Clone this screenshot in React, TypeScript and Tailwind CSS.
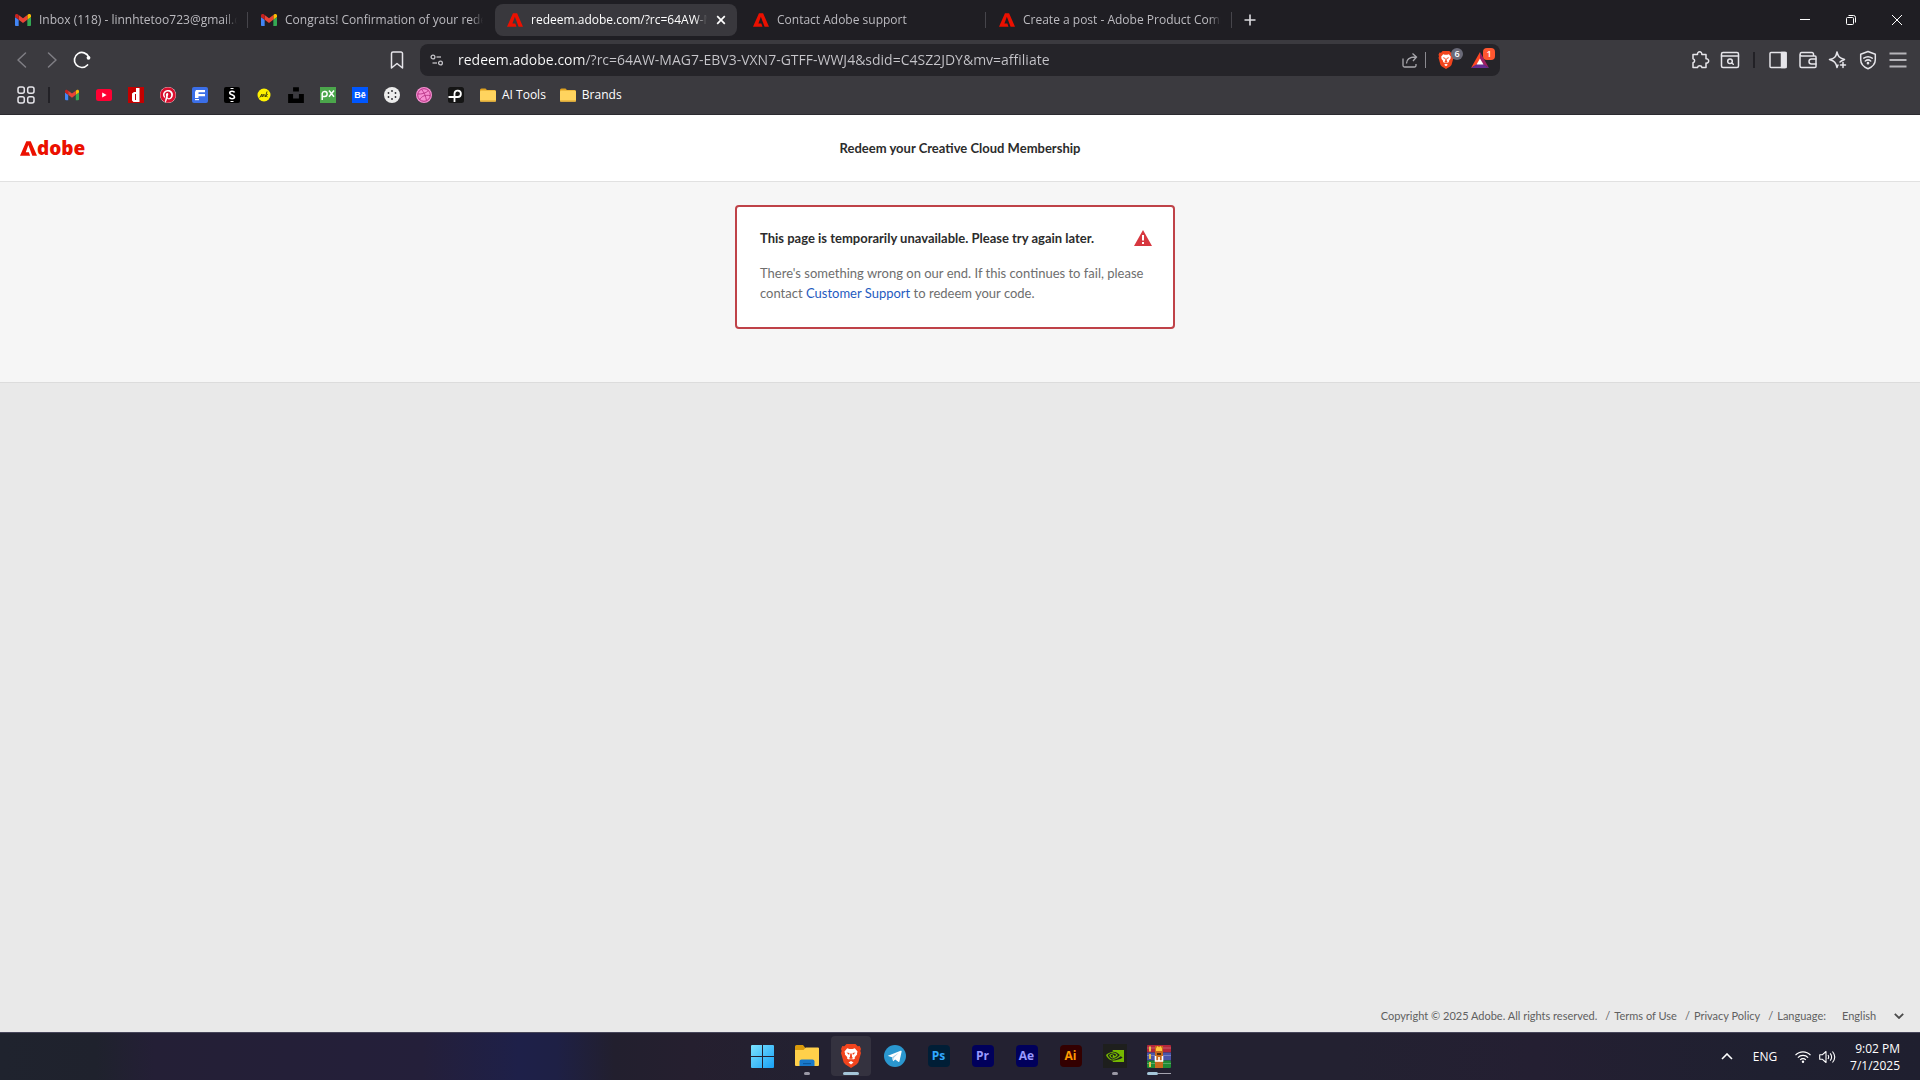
import type { ReactNode } from 'react';
import { clsx } from 'clsx';
import { FaPinterest, FaUnsplash } from 'react-icons/fa6';
import { SiNvidia } from 'react-icons/si';

type IconProps = { className?: string };

function GmailIcon({ className }: IconProps) {
  return (
    <svg viewBox="0 0 24 18" className={className} aria-hidden="true">
      <path d="M0 2.5V16.4C0 17.3.7 18 1.6 18H5.5V8.7L0 4.6z" fill="#4285f4" />
      <path d="M18.5 18h3.9c.9 0 1.6-.7 1.6-1.6V4.6l-5.5 4.1z" fill="#34a853" />
      <path d="M18.5 1.6v7.1L24 4.6V2.4c0-2-2.3-3.2-3.9-2z" fill="#fbbc04" />
      <path d="M5.5 8.7V1.6L12 6.5l6.5-4.9v7.1L12 13.6z" fill="#ea4335" />
      <path d="M0 2.4v2.2l5.5 4.1V1.6L3.9.4C2.3-.8 0 .4 0 2.4z" fill="#c5221f" />
    </svg>
  );
}

function AdobeIcon({ className }: IconProps) {
  return (
    <svg viewBox="0 2.2 24 19.6" preserveAspectRatio="none" className={className} fill="#eb1000" aria-hidden="true">
      <path d="M14.235 21.621l-1.743-4.851H8.117l3.678-9.258 5.579 14.109H24L15.155 2.379H8.909L0 21.621z" />
    </svg>
  );
}

function BraveLion({ className }: IconProps) {
  return (
    <svg viewBox="0 0 20 24" className={className} aria-hidden="true">
      <path d="M5.5 0h9l2.2 2.3 2-.3L20 5l-.7 2L20 9l-2.7 9.5-1.8 2L10 24l-5.5-3.5-1.8-2L0 9l.7-2L0 5l1.3-3 2 .3z" fill="#f1441d" />
      <path
        d="M6.2 4.2l2.2.7h3.2l2.2-.7 2.7 3.3-.5 1.900.1 1-2.4 2.9.3 1.2-1.9 1-1.2-.6-.9.6-.9-.6-1.2.6-1.9-1 .3-1.2-2.400-2.900.1-1-.5-1.900zM10 17l2.500 1.400L10 20.400l-2.500-2z"
        fill="#fff"
      />
      <path d="M5.5 8.4l3 .5-.4 2.1zM14.5 8.4l-3 .5.4 2.1zM9.3 9.5h1.4l.4 3.800 1.200.7-2.300.9-2.300-.9 1.200-.7z" fill="#f1441d" />
    </svg>
  );
}

function FolderIcon() {
  return (
    <svg viewBox="0 0 16 14" className="h-3.5 w-4 shrink-0" aria-hidden="true">
      <path d="M0 2a1.5 1.5 0 0 1 1.5-1.5h4L7 2h7.5A1.5 1.5 0 0 1 16 3.500V6H0z" fill="#dfa11f" />
      <rect y="2.6" width="16" height="11" rx="1.2" fill="#ffd45e" />
      <path d="M0 12.3h16v.2a1.2 1.2 0 0 1-1.2 1.2H1.200A1.200 1.200 0 0 1 0 12.500z" fill="#e9b33a" />
    </svg>
  );
}

// 20px line icons of the toolbar
function LineIcon({ children, className }: { children: ReactNode; className?: string }) {
  return (
    <svg
      viewBox="0 0 20 20"
      className={clsx('h-5 w-5', className)}
      fill="none"
      stroke="currentColor"
      strokeWidth="1.5"
      strokeLinecap="round"
      strokeLinejoin="round"
      aria-hidden="true"
    >
      {children}
    </svg>
  );
}

function ToolButton({ label, children, className }: { label: string; children: ReactNode; className?: string }) {
  return (
    <button type="button" aria-label={label} className={clsx('flex h-8 w-[30px] items-center justify-center', className)}>
      {children}
    </button>
  );
}

const tabs = [
  { title: 'Inbox (118) - linnhtetoo723@gmail.com', icon: 'gmail', divider: true },
  { title: 'Congrats! Confirmation of your redemption', icon: 'gmail' },
  { title: 'redeem.adobe.com/?rc=64AW-MAG7-EBV3', icon: 'adobe', active: true },
  { title: 'Contact Adobe support', icon: 'adobe', divider: true },
  { title: 'Create a post - Adobe Product Community', icon: 'adobe', divider: true },
];

function TabStrip() {
  return (
    <div className="flex h-10 bg-[#1f1e23] pl-[3px]">
      <div role="tablist" className="flex min-w-0 items-center">
        {tabs.map((tab) => (
          <div key={tab.title} className="flex items-center">
            <div
              className={clsx(
                'flex h-8 w-[242px] items-center rounded-lg pr-2 pl-3',
                tab.active ? 'bg-[#39383d] text-white' : 'text-[#bcbbc0]',
              )}
            >
              <button type="button" role="tab" aria-selected={!!tab.active} className="flex min-w-0 flex-1 items-center gap-2">
                {tab.icon === 'gmail' ? (
                  <GmailIcon className="h-3 w-4 shrink-0" />
                ) : (
                  <AdobeIcon className="h-3.5 w-4 shrink-0" />
                )}
                <span className="min-w-0 flex-1 overflow-hidden whitespace-nowrap text-left text-[12px] leading-5 [mask-image:linear-gradient(to_right,#000_calc(100%-12px),transparent)]">
                  {tab.title}
                </span>
              </button>
              {tab.active && (
                <button type="button" aria-label="Close tab" className="ml-1.5 flex h-4 w-4 items-center justify-center">
                  <svg viewBox="0 0 10 10" className="h-2.5 w-2.5" stroke="#fff" strokeWidth="1.7" aria-hidden="true">
                    <path d="M1.2 1.2l7.6 7.6M8.8 1.2L1.2 8.8" />
                  </svg>
                </button>
              )}
            </div>
            <div className="flex w-1 justify-center">
              {tab.divider && <div className="h-4 w-px bg-[#46454b]" />}
            </div>
          </div>
        ))}
      </div>
      <button type="button" aria-label="New tab" className="flex w-[34px] items-center justify-center text-[#dcdbe0]">
        <svg viewBox="0 0 12 12" className="h-3 w-3" stroke="currentColor" strokeWidth="1.6" aria-hidden="true">
          <path d="M6 .5v11M.5 6h11" />
        </svg>
      </button>
      <div className="ml-auto flex text-white">
        <button type="button" aria-label="Minimize" className="flex w-[46px] items-center justify-center">
          <svg viewBox="0 0 10 10" className="h-2.5 w-2.5" stroke="currentColor" aria-hidden="true">
            <path d="M0 4.5h10" />
          </svg>
        </button>
        <button type="button" aria-label="Restore" className="flex w-[46px] items-center justify-center">
          <svg viewBox="0 0 10 10" className="h-2.5 w-2.5" fill="none" stroke="currentColor" aria-hidden="true">
            <rect x=".5" y="2.5" width="7" height="7" rx="1" />
            <path d="M2.5.5h5a2 2 0 0 1 2 2v5" />
          </svg>
        </button>
        <button type="button" aria-label="Close" className="flex w-[46px] items-center justify-center">
          <svg viewBox="0 0 10 10" className="h-2.5 w-2.5" stroke="currentColor" aria-hidden="true">
            <path d="M0 0l10 10M10 0L0 10" />
          </svg>
        </button>
      </div>
    </div>
  );
}

function AddressBar() {
  return (
    <form className="flex h-8 w-[1080px] items-center rounded-lg bg-[#252429] pl-0.5">
      <ToolButton label="Site information" className="w-6 text-[#c4c3c8]">
        <svg viewBox="0 0 14 14" className="h-3.5 w-3.5" fill="none" stroke="currentColor" strokeWidth="1.3" aria-hidden="true">
          <circle cx="3" cy="4" r="1.9" />
          <path d="M6.5 4H11" />
          <circle cx="10.5" cy="10" r="1.9" />
          <path d="M2.5 10H7" />
        </svg>
      </ToolButton>
      <input
        type="text"
        aria-label="Address"
        spellCheck={false}
        defaultValue="redeem.adobe.com/?rc=64AW-MAG7-EBV3-VXN7-GTFF-WWJ4&sdid=C4SZ2JDY&mv=affiliate"
        className="ml-1.5 min-w-0 flex-1 bg-[linear-gradient(90deg,#ffffff_128px,#c7c6cb_128px)] bg-clip-text text-[14px] leading-6 text-transparent outline-none"
      />
      <ToolButton label="Share" className="text-[#a9a8ad]">
        <svg viewBox="0 0 16 16" className="h-4 w-4" fill="none" stroke="currentColor" strokeWidth="1.3" aria-hidden="true">
          <path d="M1 6.5v7A1.5 1.5 0 0 0 2.5 15h10a1.5 1.5 0 0 0 1.5-1.5V12" />
          <path d="M4.5 11.5c0-4 2.5-6.5 9-6.5M10.5 1.5l4 3.500-3.500 4" />
        </svg>
      </ToolButton>
      <div className="h-4 w-px bg-[#8b8a90]" />
      <button type="button" aria-label="Brave Shields, 6 blocked" className="relative ml-[11px] flex h-8 w-[18px] items-center justify-center">
        <BraveLion className="h-[18px] w-4" />
        <span className="absolute top-1 -right-2 flex h-3 w-3 items-center justify-center rounded-full bg-[#6a6a78] text-[9px] leading-3 font-semibold text-white">
          6
        </span>
      </button>
      <button type="button" aria-label="Brave Rewards" className="relative mr-[11px] ml-4 flex h-8 w-[18px] items-center justify-center">
        <svg viewBox="0 0 18 16" className="h-4 w-[18px]" aria-hidden="true">
          <path d="M9 0L0 16l9-5.5z" fill="#ff4724" />
          <path d="M9 0l9 16-9-5.5z" fill="#9e1f63" />
          <path d="M0 16h18l-9-6z" fill="#662d91" />
          <path d="M9 6.500l3.500 6h-7z" fill="#fff" />
        </svg>
        <span className="absolute top-1 -right-1.5 flex h-3 w-3 items-center justify-center rounded bg-[#ff5630] text-[9px] leading-3 font-semibold text-white">
          1
        </span>
      </button>
    </form>
  );
}

function Toolbar() {
  return (
    <div className="flex h-10 items-center px-[7px] text-[#e6e5ea]">
      <div className="flex flex-1">
        <ToolButton label="Back" className="text-[#7f7e84]">
          <LineIcon><path d="M13.500 3L6 10l7.500 7" /></LineIcon>
        </ToolButton>
        <ToolButton label="Forward" className="text-[#7f7e84]">
          <LineIcon><path d="M6.500 3l7.500 7-7.500 7" /></LineIcon>
        </ToolButton>
        <ToolButton label="Reload" className="text-white">
          <LineIcon>
            <path d="M15.500 15A7.500 7.500 0 1 1 16.800 7" strokeWidth="1.7" />
            <circle cx="16.5" cy="7.8" r="1.9" fill="currentColor" stroke="none" />
          </LineIcon>
        </ToolButton>
        <ToolButton label="Bookmark this tab" className="mr-2 ml-auto">
          <LineIcon>
            <path d="M4.500 3.500A1.500 1.500 0 0 1 6 2h8a1.500 1.500 0 0 1 1.500 1.500V18L10 13.500 4.500 18z" />
          </LineIcon>
        </ToolButton>
      </div>
      <AddressBar />
      <div className="flex flex-1 items-center justify-end">
        <ToolButton label="Extensions">
          <LineIcon>
            <path d="M3 4.500h4.500a2.200 2.200 0 1 1 4.300 0H16v4.300a2.200 2.200 0 1 1 0 4.300V17.500h-4a2.300 2.300 0 0 0-4.500 0H3v-4.700a2.100 2.100 0 0 0 0-4.100z" />
          </LineIcon>
        </ToolButton>
        <ToolButton label="Search tabs">
          <LineIcon>
            <rect x="1.5" y="2.5" width="17" height="15" rx="1.5" />
            <path d="M1.500 6h17" />
            <circle cx="10" cy="11.3" r="2.3" />
            <path d="M11.800 13l1.500 1.300" />
          </LineIcon>
        </ToolButton>
        <div className="mx-2 h-4 w-0.5 bg-[#222126]" />
        <ToolButton label="Side panel">
          <LineIcon>
            <rect x="2" y="2.5" width="16" height="15" rx="1" />
            <path d="M13.500 2.500H18v15h-4.500z" fill="currentColor" />
          </LineIcon>
        </ToolButton>
        <ToolButton label="Wallet">
          <LineIcon>
            <path d="M15.500 6V4A1.500 1.500 0 0 0 14 2.500H3.500a1.800 1.800 0 0 0 0 3.500H17a1 1 0 0 1 1 1v9.500a1 1 0 0 1-1 1H3.500a1.500 1.500 0 0 1-1.500-1.500V4.500" />
            <path d="M18 9h-4.500a2.500 2.500 0 0 0 0 5H18" />
          </LineIcon>
        </ToolButton>
        <ToolButton label="Leo AI">
          <LineIcon>
            <path d="M9 2c1 4.500 2 5.500 7.500 7.500-2.500 1-3.500 1.500-4.500 2.500M9 2C8 7 6.500 8.500 1.500 9.500 6.500 11 8 12.500 9 17.500c.3-1 .5-1.800 1-2.500" />
            <path d="M15 12.500v5M12.500 15h5" />
          </LineIcon>
        </ToolButton>
        <ToolButton label="VPN">
          <LineIcon>
            <path d="M10 1.500l7.300 2.700v5.600c0 4-3 7.200-7.300 8.900-4.300-1.700-7.300-4.900-7.300-8.900V4.200z" />
            <path d="M5.800 8.200c2.500-1.700 6-1.700 8.400 0M7.300 11c1.500-1.200 4-1.200 5.400 0" />
            <circle cx="10" cy="13.2" r=".6" fill="currentColor" />
          </LineIcon>
        </ToolButton>
        <ToolButton label="Menu" className="text-[#b5b4b9]">
          <LineIcon>
            <path d="M1.500 3.500h17M1.500 10h17M1.500 16.500h17" strokeWidth="1.8" strokeLinecap="butt" />
          </LineIcon>
        </ToolButton>
      </div>
    </div>
  );
}

const bookmarks: { label: string; icon: ReactNode }[] = [
  { label: 'Gmail', icon: <GmailIcon className="h-3 w-3.5" /> },
  {
    label: 'YouTube',
    icon: (
      <svg viewBox="0 0 16 12" className="h-3 w-4">
        <rect width="16" height="12" rx="2.5" fill="#ff0033" />
        <path d="M6.200 3.600v4.800L10.600 6z" fill="#fff" />
      </svg>
    ),
  },
  {
    label: 'Dafont',
    icon: (
      <svg viewBox="0 0 16 16" className="h-4 w-4">
        <rect width="16" height="16" fill="#c40000" />
        <path d="M8 1h3.500v14H5.500L4 13.500v-7L6 5h2zM7 7v6h1V7z" fill="#fff" fillRule="evenodd" />
      </svg>
    ),
  },
  {
    label: 'Pinterest',
    icon: (
      <span className="flex h-4 w-4 items-center justify-center rounded-full bg-white">
        <FaPinterest className="h-4 w-4 text-[#d8102f]" />
      </span>
    ),
  },
  {
    label: 'Freebies',
    icon: (
      <svg viewBox="0 0 16 16" className="h-4 w-4">
        <rect width="16" height="16" rx="2" fill="#3b6fe8" />
        <path d="M4 3h9v2.300H6.500V7H13v2.300H6.500V11H3V5z" fill="#fff" />
        <path d="M3 12h4v1.200H3z" fill="#fff" />
      </svg>
    ),
  },
  {
    label: 'Savee',
    icon: (
      <svg viewBox="0 0 16 16" className="h-4 w-4" fill="none" stroke="#fff">
        <rect width="16" height="16" rx="2" fill="#000" stroke="none" />
        <path d="M10.500 5.500c-.5-1.700-4.800-1.700-4.800.5 0 2 4.800 1.700 4.800 4 0 2.300-4.500 2.300-5 .3" strokeWidth="1.6" />
        <path d="M6.500 1.500h3M6.500 14.500h3" strokeWidth="1.2" />
      </svg>
    ),
  },
  {
    label: 'Netlify Kit',
    icon: (
      <svg viewBox="0 0 16 16" className="h-4 w-4" fill="none" stroke="#33330a">
        <circle cx="8" cy="8" r="6.5" fill="#fff200" stroke="none" />
        <path d="M3.800 10.500L6 7v3l2-2.800v2.600M11 4.500L9.300 10M9.500 9l2.300-1.800M9.800 8.800l1.700 1" strokeWidth=".9" />
      </svg>
    ),
  },
  { label: 'Unsplash', icon: <FaUnsplash className="h-[18px] w-[18px] text-black" /> },
  {
    label: 'Pexels',
    icon: (
      <svg viewBox="0 0 16 16" className="h-4 w-4" fill="none" stroke="#fff" strokeWidth="1.5">
        <rect width="16" height="16" fill="#4ba64b" stroke="none" />
        <path d="M2.200 13V6.500a2.500 2.500 0 1 1 2.500 3H2.500M9 3.500l5 6.300M14 3.500L9 9.800" />
      </svg>
    ),
  },
  {
    label: 'Behance',
    icon: (
      <span className="flex h-4 w-4 items-center justify-center bg-[#0057ff] font-['Liberation_Sans'] text-[9px] leading-4 font-bold text-white">
        Bē
      </span>
    ),
  },
  {
    label: 'Color tools',
    icon: (
      <svg viewBox="0 0 16 16" className="h-4 w-4" fill="#28272c">
        <circle cx="8" cy="8" r="8" fill="#ececec" />
        <circle cx="8" cy="4" r=".9" />
        <circle cx="8" cy="12" r=".9" />
        <circle cx="4.5" cy="6" r=".9" />
        <circle cx="11.5" cy="6" r=".9" />
        <circle cx="4.5" cy="10" r=".9" />
        <circle cx="11.5" cy="10" r=".9" />
      </svg>
    ),
  },
  {
    label: 'Dribbble',
    icon: (
      <svg viewBox="0 0 16 16" className="h-4 w-4" fill="none" stroke="#b73384">
        <circle cx="8" cy="8" r="8" fill="#f78fd2" stroke="none" />
        <circle cx="8" cy="8" r="6.3" />
        <path d="M5.500 2.300c2.500 3 4.200 6.500 5 11.200M1.800 7c4 .2 8-.5 10.500-3.500M3.800 12.600c2-3.600 5.500-5 10.400-4" strokeWidth=".9" />
      </svg>
    ),
  },
  {
    label: 'Pixabay',
    icon: (
      <svg viewBox="0 0 16 16" className="h-4 w-4" fill="none" stroke="#fff" strokeWidth="1.8">
        <rect width="16" height="16" rx="2.5" fill="#151515" stroke="none" />
        <path d="M6.500 15V6.500a3.200 3.200 0 1 1 3.200 3.500H.5" />
      </svg>
    ),
  },
];

function BookmarksBar() {
  return (
    <nav aria-label="Bookmarks" className="flex h-[35px] items-start border-b border-[#2b2a2f] pt-[5px] pl-4 text-[12px] leading-5 text-white">
      <button type="button" aria-label="All bookmarks" className="flex h-5 w-5 items-center justify-center">
        <svg viewBox="0 0 18 18" className="h-[18px] w-[18px]" fill="none" stroke="#e6e5ea" strokeWidth="1.5" aria-hidden="true">
          <rect x="1" y="1" width="6.3" height="6.3" rx="2" />
          <rect x="10.7" y="1" width="6.3" height="6.3" rx="2" />
          <rect x="1" y="10.7" width="6.3" height="6.3" rx="2" />
          <rect x="10.7" y="10.7" width="6.3" height="6.3" rx="2" />
        </svg>
      </button>
      <div className="mt-0.5 mr-1.5 ml-3 h-4 w-0.5 bg-[#222126]" />
      {bookmarks.map((b) => (
        <a key={b.label} href="#" aria-label={b.label} className="flex h-5 w-8 items-center justify-center">
          {b.icon}
        </a>
      ))}
      <button type="button" className="ml-2 flex items-center gap-1.5">
        <FolderIcon />
        AI Tools
      </button>
      <button type="button" className="ml-3.5 flex items-center gap-1.5">
        <FolderIcon />
        Brands
      </button>
    </nav>
  );
}

const footerLinks = ['Terms of Use', 'Privacy Policy'];

function RedeemPage() {
  return (
    <main className="flex flex-1 flex-col bg-[#e9e9e9] font-['Lato',sans-serif]">
      <header className="grid h-[67px] grid-cols-[1fr_auto_1fr] items-center border-b border-[#e1e1e1] bg-white px-5">
        <a href="#" aria-label="Adobe" className="flex items-center text-[#eb1000]">
          <AdobeIcon className="h-[15px] w-[17px]" />
          <span className="font-['Open_Sans'] text-[19px] leading-5 font-extrabold">dobe</span>
        </a>
        <h1 className="text-[13px] leading-5 font-bold text-[#2c2c2c]">Redeem your Creative Cloud Membership</h1>
      </header>

      <section className="border-b border-[#dcdcdc] bg-[#f6f6f6] pt-[23px] pr-2.5 pb-[53px]">
        <div role="alert" className="mx-auto w-[440px] rounded-sm border-2 border-[#bf4248] bg-white px-[23px] pt-[21px] pb-6">
          <div className="flex items-center justify-between">
            <h2 className="text-[13px] leading-5 font-bold text-[#2c2c2c]">
              This page is temporarily unavailable. Please try again later.
            </h2>
            <svg viewBox="0 0 18 16" className="-mr-0.5 h-4 w-[18px] shrink-0" aria-hidden="true">
              <path d="M9 0l9 16H0z" fill="#d7373f" />
              <path d="M8 5h2v5.500H8zM8 12h2v2H8z" fill="#fff" />
            </svg>
          </div>
          <p className="mt-[15px] text-[13px] leading-5 text-[#6e6e6e]">
            There's something wrong on our end. If this continues to fail, please contact{' '}
            <a href="#" className="text-[#1f5bc0]">Customer Support</a> to redeem your code.
          </p>
        </div>
      </section>

      <footer className="mt-auto flex items-center justify-end gap-2 pr-4 pb-1.5 text-[11px] leading-5 text-[#606060]">
        <span>Copyright © 2025 Adobe. All rights reserved.</span>
        {footerLinks.map((link) => (
          <div key={link} className="flex gap-1">
            <span>/</span>
            <a href="#">{link}</a>
          </div>
        ))}
        <div className="flex gap-1">
          <span>/</span>
          <label htmlFor="language">Language:</label>
        </div>
        <div className="relative ml-2 flex items-center">
          <select id="language" className="w-[62px] appearance-none bg-transparent">
            <option>English</option>
          </select>
          <svg viewBox="0 0 10 6" className="pointer-events-none absolute right-0 h-1.5 w-2.5" fill="none" stroke="#4b4b4b" strokeWidth="1.8" aria-hidden="true">
            <path d="M.8.8L5 5 9.200.8" />
          </svg>
        </div>
      </footer>
    </main>
  );
}

function AdobeApp({ short, className }: { short: string; className: string }) {
  return (
    <span className={clsx("flex h-[22px] w-[22px] items-center justify-center rounded-[4px] font-['Open_Sans'] text-[12px] leading-4 font-bold", className)}>
      {short}
    </span>
  );
}

const apps: { label: string; icon: ReactNode; state?: 'running' | 'active' | 'progress' }[] = [
  {
    label: 'Start',
    icon: (
      <svg viewBox="0 0 23 23" className="h-[23px] w-[23px]">
        <defs>
          <linearGradient id="win" x1="0" y1="0" x2="1" y2="1">
            <stop stopColor="#7be3ff" />
            <stop offset="1" stopColor="#18a0f5" />
          </linearGradient>
        </defs>
        <path d="M0 1a1 1 0 0 1 1-1h10v11H0zM12 0h10a1 1 0 0 1 1 1v10H12zM0 12h11v11H1a1 1 0 0 1-1-1zM12 12h11v10a1 1 0 0 1-1 1H12z" fill="url(#win)" />
      </svg>
    ),
  },
  {
    label: 'File Explorer',
    state: 'running',
    icon: (
      <svg viewBox="0 0 24 22" className="h-[22px] w-6">
        <path d="M0 1.500A1.500 1.500 0 0 1 1.500 0H8l2 2.500V7H0z" fill="#d99a0b" />
        <path d="M0 5h8.500l2.200-2.500H23a1 1 0 0 1 1 1V20a1 1 0 0 1-1 1H1a1 1 0 0 1-1-1z" fill="#ffd04a" />
        <path d="M4.500 21v-4.500a2 2 0 0 1 2-2h11a2 2 0 0 1 2 2V21z" fill="#1979ca" />
        <path d="M8 18h8v1.200H8z" fill="#0c5a9f" />
      </svg>
    ),
  },
  { label: 'Brave', state: 'active', icon: <BraveLion className="h-6 w-5" /> },
  {
    label: 'Telegram',
    icon: (
      <svg viewBox="0 0 22 22" className="h-[22px] w-[22px]">
        <circle cx="11" cy="11" r="11" fill="#2a97cf" />
        <path d="M4 10.700L16.600 5.800c.7-.2 1.200.1 1 1l-2.100 9.500c-.1.700-.6.900-1.200.5l-3.100-2.300-1.600 1.500c-.3.300-.6.200-.7-.2L8 12.300l-3.900-1.200c-.4-.1-.4-.3-.1-.4z" fill="#fff" />
        <path d="M8 12.300l6.800-4.600-5.200 5.200-.4 2.800z" fill="#a9cfe6" />
      </svg>
    ),
  },
  { label: 'Photoshop', icon: <AdobeApp short="Ps" className="bg-[#001e36] text-[#31a8ff]" /> },
  { label: 'Premiere Pro', icon: <AdobeApp short="Pr" className="bg-[#00005b] text-[#9999ff]" /> },
  { label: 'After Effects', icon: <AdobeApp short="Ae" className="bg-[#00005b] text-[#9999ff]" /> },
  { label: 'Illustrator', icon: <AdobeApp short="Ai" className="bg-[#330000] text-[#ff9a00]" /> },
  {
    label: 'NVIDIA',
    state: 'running',
    icon: (
      <span className="flex h-6 w-6 items-center justify-center bg-[#1e1f1d]">
        <SiNvidia className="h-[18px] w-[18px] text-[#76b900]" />
      </span>
    ),
  },
  {
    label: 'WinRAR',
    state: 'progress',
    icon: (
      <svg viewBox="0 0 24 23" className="h-[23px] w-6">
        <rect width="24" height="7.5" rx="1" fill="#b3273a" />
        <rect y="7.5" width="24" height="8" fill="#4a55a8" />
        <rect y="15.5" width="24" height="7.5" rx="1" fill="#1f8a35" />
        <path d="M0 3h24M0 10.500h24M0 18.500h24" stroke="#fff" strokeOpacity=".25" />
        <path d="M2 1.500h2v5H2zM2 9h2v5H2zM2 17h2v5H2z" fill="#e8c14a" />
        <rect x="8" y="1" width="8" height="22" fill="#c76a1c" />
        <path d="M9 3.500L10.500 1 12 2.500 13.500 1 15 3.500V6H9z" fill="#ffc83a" />
        <path d="M8.500 11v5h7v-5M12 12v3.500" fill="none" stroke="#fff" strokeWidth="1.6" />
        <rect x="10" y="8" width="4" height="2" fill="#4c2a12" />
      </svg>
    ),
  },
];

function Taskbar() {
  return (
    <div className="grid h-12 grid-cols-[1fr_auto_1fr] border-t border-[#46455a] bg-[linear-gradient(90deg,#1f232e_0%,#1f222d_5%,#241f36_8%,#241f3a_22%,#1e2049_27%,#1e2045_29%,#221f2e_32%,#251f2f_36%,#232131_42%,#232131_70%,#241f32_80%,#1f2030_92%,#1f1f2f_100%)]">
      <div />
      <div className="flex gap-1 pt-[3px] pl-px">
        {apps.map((app) => (
          <button
            key={app.label}
            type="button"
            aria-label={app.label}
            className={clsx(
              'relative flex h-10 w-10 items-center justify-center rounded',
              app.state === 'active' && 'bg-[#34323f]',
            )}
          >
            {app.icon}
            {app.state === 'running' && (
              <span className="absolute bottom-px left-[17px] h-[3px] w-1.5 rounded-full bg-[#9b99a6]" />
            )}
            {app.state === 'active' && (
              <span className="absolute bottom-px left-3 h-[3px] w-4 rounded-full bg-[#a5c6d9]" />
            )}
            {app.state === 'progress' && (
              <span className="absolute right-2 bottom-px left-2 flex h-[3px] items-center">
                <span className="h-[3px] w-[11px] rounded-full bg-[#a5c6d9]" />
                <span className="h-px flex-1 bg-[#a5a4b0]" />
              </span>
            )}
          </button>
        ))}
      </div>
      <div className="flex items-center justify-end pr-5 text-[12px] leading-[17px] text-white">
        <button type="button" aria-label="Show hidden icons" className="flex h-8 w-8 items-center justify-center">
          <svg viewBox="0 0 12 7" className="h-[7px] w-3" fill="none" stroke="currentColor" strokeWidth="1.6" aria-hidden="true">
            <path d="M1 6l5-5 5 5" />
          </svg>
        </button>
        <button type="button" className="ml-2 w-7 text-center">ENG</button>
        <button type="button" aria-label="Network and sound" className="ml-4 flex items-center gap-2">
          <svg viewBox="0 0 16 13" className="h-[13px] w-4" fill="none" stroke="currentColor" strokeWidth="1.2" aria-hidden="true">
            <path d="M.5 5.200c4-4.500 11-4.500 15 0M2.900 7.600c2.700-3 7.500-3 10.200 0M5.200 9.900c1.500-1.700 4.100-1.700 5.600 0" />
            <circle cx="8" cy="11.7" r="1.2" fill="currentColor" stroke="none" />
          </svg>
          <svg viewBox="0 0 17 14" className="h-3.5 w-[17px]" fill="none" stroke="currentColor" strokeWidth="1.1" strokeLinejoin="round" aria-hidden="true">
            <path d="M.7 4.800h2.500L7 1.500v11L3.200 9.200H.7z" />
            <path d="M9 5c.8 1.200.8 2.800 0 4M11.200 3.300c1.700 2.200 1.700 5.200 0 7.400M13.500 1.500c2.700 3.300 2.700 7.700 0 11" />
          </svg>
        </button>
        <div className="ml-3.5 flex flex-col text-right">
          <span>9:02 PM</span>
          <span>7/1/2025</span>
        </div>
      </div>
    </div>
  );
}

export default function App() {
  return (
    <div className="flex min-h-screen flex-col bg-[#3b3a3f] font-['Open_Sans',sans-serif]">
      <TabStrip />
      <Toolbar />
      <BookmarksBar />
      <RedeemPage />
      <Taskbar />
    </div>
  );
}
